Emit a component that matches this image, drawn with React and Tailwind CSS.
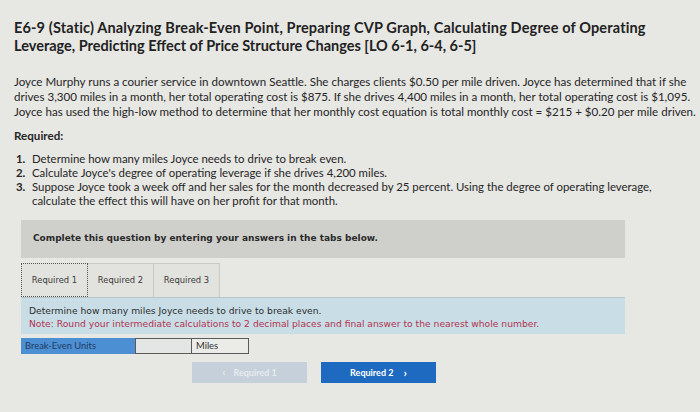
import React from 'react';

const sans = { fontFamily: 'Lato, "Open Sans", sans-serif' };
const verdana = { fontFamily: '"DejaVu Sans", Verdana, sans-serif' };

const App = () => {
  return (
    <div className="w-[700px] h-[412px] overflow-hidden bg-[#e7e7e4] text-[#262626]" style={sans}>
      <div className="pl-[14px] pt-[19px]">
        <h1 className="text-[14.5px] font-bold leading-[18px] text-[#222]">
          <span className="tracking-[0.15px]">E6-9 (Static) Analyzing Break-Even Point, Preparing CVP Graph, Calculating Degree of Operating</span>
          <br />
          <span>Leverage, Predicting Effect of Price Structure Changes [LO 6-1, 6-4, 6-5]</span>
        </h1>

        <p className="mt-[19px] text-[11.6px] leading-[15px]">
          Joyce Murphy runs a courier service in downtown Seattle. She charges clients $0.50 per mile driven. Joyce has determined that if she
          <br />
          drives 3,300 miles in a month, her total operating cost is $875. If she drives 4,400 miles in a month, her total operating cost is $1,095.
          <br />
          Joyce has used the high-low method to determine that her monthly cost equation is total monthly cost = $215 + $0.20 per mile driven.
        </p>

        <p className="mt-[9px] text-[11.6px] leading-[15px] font-bold">Required:</p>

        <ol className="mt-[9px] text-[11.4px] leading-[14px]">
          <li className="flex"><span className="w-[18px] pl-[2px] font-bold">1.</span><span>Determine how many miles Joyce needs to drive to break even.</span></li>
          <li className="flex"><span className="w-[18px] pl-[2px] font-bold">2.</span><span>Calculate Joyce's degree of operating leverage if she drives 4,200 miles.</span></li>
          <li className="flex">
            <span className="w-[18px] pl-[2px] font-bold">3.</span>
            <span>
              Suppose Joyce took a week off and her sales for the month decreased by 25 percent. Using the degree of operating leverage,
              <br />
              calculate the effect this will have on her profit for that month.
            </span>
          </li>
        </ol>
      </div>

      <div className="ml-[21px] w-[604px] mt-[12px]" style={verdana}>
        <div className="h-[38px] bg-[#cfcfcc] flex items-center pl-[12px] text-[9px] font-bold text-[#2a2a2a]">
          Complete this question by entering your answers in the tabs below.
        </div>

        <div className="mt-[5px] flex h-[34px] text-[8.4px] text-[#3a3a3a]">
          <div className="w-[67px] flex items-center justify-center bg-[#e2e2df] border border-dotted border-[#555]">Required 1</div>
          <div className="w-[66px] flex items-center justify-center bg-[#e2e2df] border-t border-r border-[#c9c9c6]">Required 2</div>
          <div className="w-[66px] flex items-center justify-center bg-[#e2e2df] border-t border-r border-[#c9c9c6]">Required 3</div>
        </div>

        <div className="h-[37px] bg-[#c8dde6] border-t border-[#b7c4c9] px-[8px] pt-[6px] text-[9.2px] leading-[13px]">
          <div className="text-[#2e2e2e]">Determine how many miles Joyce needs to drive to break even.</div>
          <div className="text-[#b2344f]">Note: Round your intermediate calculations to 2 decimal places and final answer to the nearest whole number.</div>
        </div>

        <div className="mt-[4px] flex h-[16px] text-[9.4px]" style={sans}>
          <div className="w-[114px] bg-[#4d8fd3] text-[#1f3d66] flex items-center pl-[4px]">Break-Even Units</div>
          <div className="w-[57px] bg-[#e4e6e5] border border-[#5a5a5a]"></div>
          <div className="w-[57px] bg-[#ebebe8] border-y border-r border-[#5a5a5a] flex items-center pl-[4px] text-[#333]">Miles</div>
        </div>

        <div className="mt-[8px] flex gap-[14px] pl-[171px]" style={sans}>
          <div className="w-[115px] h-[21px] bg-[#c5d0da] text-[#e6ebf0] text-[9px] font-bold flex items-center justify-center gap-[8px]">
            <span className="text-[11px]">‹</span>
            <span>Required 1</span>
          </div>
          <div className="w-[115px] h-[21px] bg-[#1e6ac0] text-white text-[9px] font-bold flex items-center justify-center gap-[10px]">
            <span>Required 2</span>
            <span className="text-[12px]">›</span>
          </div>
        </div>
      </div>
    </div>
  );
};

export default App;
